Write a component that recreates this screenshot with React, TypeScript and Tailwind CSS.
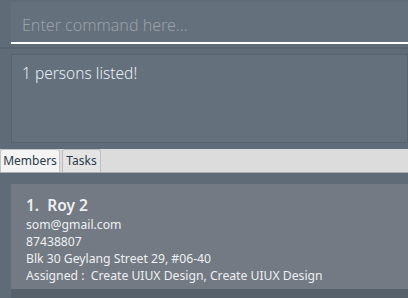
import React from 'react'

const font = { fontFamily: '"Segoe UI", "Noto Sans", "Open Sans", sans-serif' }

const PersonCard = () => {
    return (
        <div className="ml-[11px] bg-[#737a84] pl-[15px] pt-[10px] h-[105px] text-[#eef0f2]">
            <div className="text-[15.5px] leading-[22px] font-semibold">1.&nbsp;&nbsp;Roy 2</div>
            <div className="text-[12.2px] leading-[17px]">
                <p>som@gmail.com</p>
                <p>87438807</p>
                <p>Blk 30 Geylang Street 29, #06-40</p>
                <p>Assigned :&nbsp; Create UIUX Design, Create UIUX Design</p>
            </div>
        </div>
    )
}

export default function App() {
    return (
        <div className="w-[408px] h-[298px] overflow-hidden bg-[#5f6b77] flex flex-col" style={font}>
            <div className="pl-[11px] pt-[2px]">
                <div className="h-[42px] bg-[#64707c] border-b-2 border-white flex items-center pl-[11px] pt-[5px]">
                    <span className="text-[16px] font-light text-[#9aa1a8]">Enter command here...</span>
                </div>
            </div>
            <div className="h-[3px]" />
            <div className="h-[2px] bg-[#58646f]" />
            <div className="h-[5px]" />
            <div className="ml-[11px] h-[89px] bg-[#64707c] border border-[#57636e] px-[10px] pt-[6px]">
                <span className="text-[15.5px] font-light text-[#e8eef2]">1 persons listed!</span>
            </div>
            <div className="h-[6px]" />
            <div className="h-[24px] bg-[#dcdcdc] flex items-end gap-[2px] border-b border-[#a9adb1]">
                <div className="h-[23px] w-[60px] bg-[#f4f4f4] border border-b-0 border-[#c4c4c4] rounded-t-[3px] flex items-center justify-center text-[12px] text-[#2b3a4a]">
                    Members
                </div>
                <div className="h-[23px] w-[39px] bg-[#e4e4e4] border border-b-0 border-[#bdbdbd] rounded-t-[3px] flex items-center justify-center text-[12px] text-[#2b3a4a]">
                    Tasks
                </div>
            </div>
            <div className="h-[11px]" />
            <PersonCard />
            <div className="flex-1 ml-[11px] bg-[#56616c]" />
        </div>
    )
}
